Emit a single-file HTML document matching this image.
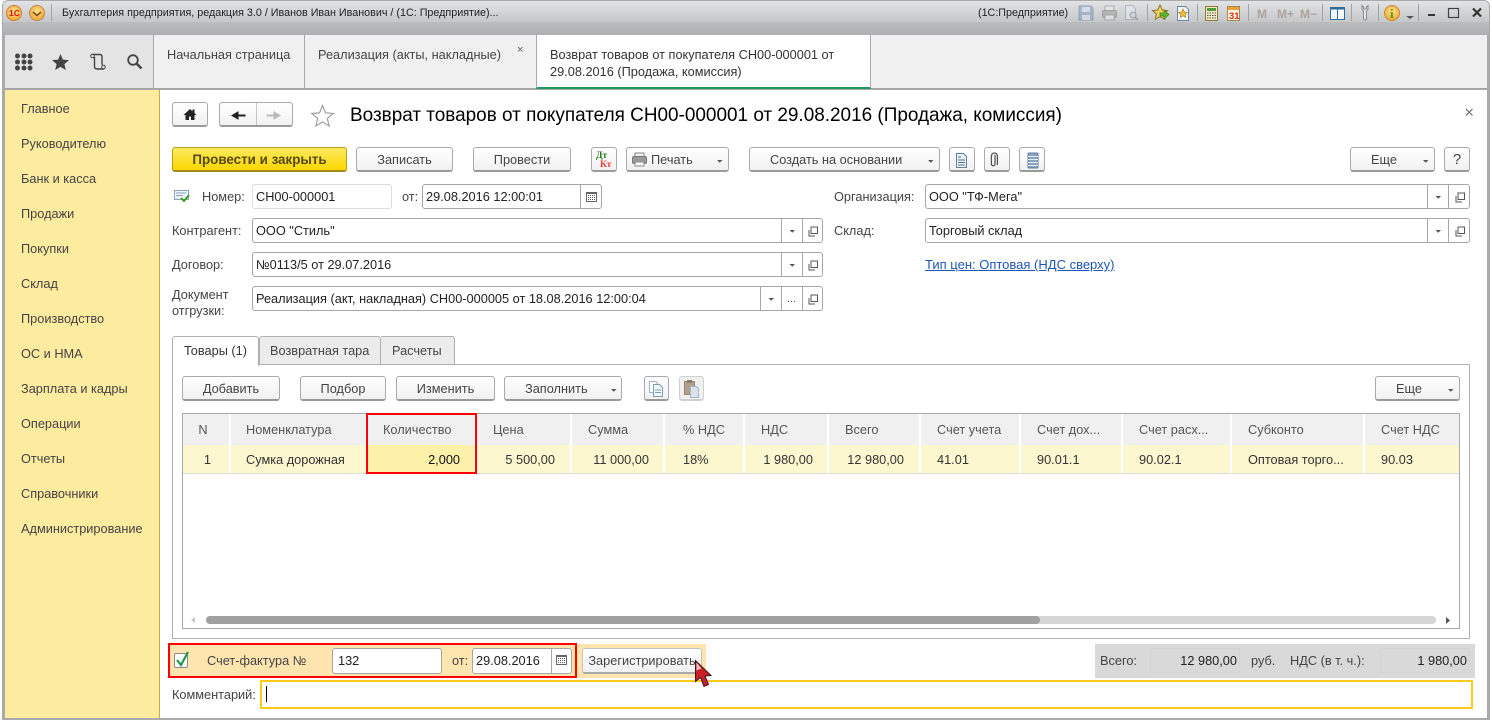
<!DOCTYPE html>
<html lang="ru"><head><meta charset="utf-8"><title>Возврат товаров</title>
<style>
*{box-sizing:border-box}
html,body{margin:0;padding:0;width:1492px;height:724px;overflow:hidden;background:#fff}
body{position:relative;font:12.75px/14px "Liberation Sans",Arial,sans-serif;color:#444}
.a,.t,.b,.f{position:absolute}
.t{white-space:nowrap}
.d{color:#222}
.b{border:1px solid #aaa;border-bottom:2px solid #9a9a9a;border-radius:3px;background:linear-gradient(#fff,#f1f1f1);text-align:center;line-height:24px;height:25px;color:#444;white-space:nowrap}
.f{border:1px solid #a6a6a6;border-radius:3px;background:#fff;height:25px;line-height:23px;padding-left:3px;color:#222;white-space:nowrap}
.s{position:absolute;top:0;bottom:0;width:1px;background:#a6a6a6}
.n{position:absolute;left:21px;white-space:nowrap;color:#444;margin-top:1px}
.h{position:absolute;top:414px;height:31px;background:#f0f0f0;border-right:2px solid #fff;line-height:31px;white-space:nowrap;color:#555}
.c{position:absolute;top:445px;height:28px;background:#fdf7d0;border-right:2px solid #fff;line-height:30px;white-space:nowrap;color:#333}
.pl{padding-left:14px}.pr{text-align:right;padding-right:14px}
</style></head><body>

<!-- window -->
<div class="a" style="left:0;top:0;width:1492px;height:724px;background:#fff"></div>
<div class="a" style="left:2px;top:0;width:1488px;height:720px;border-radius:6px 6px 0 0;background:#a9aaac"></div>
<div class="a" style="left:3px;top:1px;width:1486px;height:21px;border-radius:5px 5px 0 0;background:linear-gradient(#e2e3e4,#c6c7c9)"></div>
<div class="a" style="left:3px;top:22px;width:1486px;height:13px;background:linear-gradient(#bcbdbf,#aeafb1)"></div>
<div class="t" style="left:62px;top:6px;font-size:10.75px;color:#222;line-height:15px">Бухгалтерия предприятия, редакция 3.0 / Иванов Иван Иванович / (1С: Предприятие)...</div>
<div class="t" style="left:978px;top:6px;font-size:10.75px;color:#222;line-height:15px">(1С:Предприятие)</div>

<!-- tab bar -->
<div class="a" style="left:5px;top:35px;width:1482px;height:54px;background:#f0f0f0;border-bottom:1px solid #a3a3a3"></div>
<div class="a" style="left:5px;top:35px;width:148px;height:53px;background:#e4e4e4"></div>
<div class="a" style="left:153px;top:35px;width:1px;height:53px;background:#a9a9a9"></div>
<div class="a" style="left:304px;top:35px;width:1px;height:53px;background:#a9a9a9"></div>
<div class="a" style="left:536px;top:35px;width:335px;height:54px;background:#fff;border-left:1px solid #a9a9a9;border-right:1px solid #a9a9a9;border-bottom:2px solid #1f9a5a"></div>
<div class="t" style="left:167px;top:48px">Начальная страница</div>
<div class="t" style="left:318px;top:48px">Реализация (акты, накладные)</div>
<div class="t" style="left:550px;top:46px;line-height:17px;color:#333">Возврат товаров от покупателя СН00-000001 от<br>29.08.2016 (Продажа, комиссия)</div>

<!-- left nav -->
<div class="a" style="left:5px;top:90px;width:155px;height:629px;background:#fdeb9f;border-right:1px solid #c9ab3f"></div>
<div class="n" style="top:101px">Главное</div>
<div class="n" style="top:136px">Руководителю</div>
<div class="n" style="top:171px">Банк и касса</div>
<div class="n" style="top:206px">Продажи</div>
<div class="n" style="top:241px">Покупки</div>
<div class="n" style="top:276px">Склад</div>
<div class="n" style="top:311px">Производство</div>
<div class="n" style="top:346px">ОС и НМА</div>
<div class="n" style="top:381px">Зарплата и кадры</div>
<div class="n" style="top:416px">Операции</div>
<div class="n" style="top:451px">Отчеты</div>
<div class="n" style="top:486px">Справочники</div>
<div class="n" style="top:521px">Администрирование</div>

<!-- content -->
<div class="a" style="left:160px;top:90px;width:1327px;height:628px;background:#fff"></div>

<div class="b" style="left:172px;top:102px;width:36px"></div>
<div class="b" style="left:219px;top:102px;width:74px"></div>
<div class="a" style="left:256px;top:103px;width:1px;height:22px;background:#c4c4c4"></div>
<div class="t" style="left:350px;top:105px;font-size:18.95px;line-height:21px;color:#000">Возврат товаров от покупателя СН00-000001 от 29.08.2016 (Продажа, комиссия)</div>

<!-- command bar -->
<div class="b" style="left:172px;top:147px;width:175px;background:linear-gradient(#fdea5e,#fbd700);border-color:#b99f20;border-bottom-color:#a08a18;font-weight:bold;font-size:13.4px;color:#554a14">Провести и закрыть</div>
<div class="b" style="left:356px;top:147px;width:97px">Записать</div>
<div class="b" style="left:473px;top:147px;width:98px">Провести</div>
<div class="b" style="left:591px;top:147px;width:26px"></div>
<div class="b" style="left:626px;top:147px;width:103px;text-align:left;padding-left:24px">Печать</div>
<div class="b" style="left:749px;top:147px;width:191px;text-align:left;padding-left:20px">Создать на основании</div>
<div class="b" style="left:949px;top:147px;width:26px"></div>
<div class="b" style="left:984px;top:147px;width:26px"></div>
<div class="b" style="left:1019px;top:147px;width:26px"></div>
<div class="b" style="left:1350px;top:147px;width:85px;text-align:left;padding-left:20px">Еще</div>
<div class="b" style="left:1444px;top:147px;width:26px;font-size:15px;line-height:23px">?</div>

<!-- form -->
<div class="t" style="left:202px;top:190px">Номер:</div>
<div class="f" style="left:252px;top:184px;width:140px;border-color:#dcdcdc">СН00-000001</div>
<div class="t" style="left:402px;top:190px">от:</div>
<div class="f" style="left:422px;top:184px;width:180px">29.08.2016 12:00:01<div class="s" style="left:157px"></div></div>

<div class="t" style="left:172px;top:224px">Контрагент:</div>
<div class="f" style="left:252px;top:218px;width:571px">ООО "Стиль"<div class="s" style="left:528px"></div><div class="s" style="left:549px"></div></div>
<div class="t" style="left:172px;top:258px">Договор:</div>
<div class="f" style="left:252px;top:252px;width:571px">№0113/5 от 29.07.2016<div class="s" style="left:528px"></div><div class="s" style="left:549px"></div></div>
<div class="t" style="left:172px;top:287px;line-height:16px">Документ<br>отгрузки:</div>
<div class="f" style="left:252px;top:286px;width:571px">Реализация (акт, накладная) СН00-000005 от 18.08.2016 12:00:04<div class="s" style="left:507px"></div><div class="s" style="left:528px"></div><div class="s" style="left:549px"></div><div class="a" style="left:534px;top:1px;font-size:11px;color:#555">...</div></div>

<div class="t" style="left:834px;top:190px">Организация:</div>
<div class="f" style="left:925px;top:184px;width:545px">ООО "ТФ-Мега"<div class="s" style="left:501px"></div><div class="s" style="left:522px"></div></div>
<div class="t" style="left:834px;top:224px">Склад:</div>
<div class="f" style="left:925px;top:218px;width:545px">Торговый склад<div class="s" style="left:501px"></div><div class="s" style="left:522px"></div></div>
<div class="t" style="left:925px;top:258px;font-size:13px;color:#1f56b5;text-decoration:underline">Тип цен: Оптовая (НДС сверху)</div>

<!-- tabs -->
<div class="a" style="left:172px;top:364px;width:1298px;height:275px;border:1px solid #b0b0b0;background:#fff"></div>
<div class="a" style="left:259px;top:336px;width:122px;height:29px;background:#ececec;border:1px solid #b0b0b0;border-radius:3px 3px 0 0"></div>
<div class="a" style="left:381px;top:336px;width:74px;height:29px;background:#ececec;border:1px solid #b0b0b0;border-left:0;border-radius:0 3px 0 0"></div>
<div class="a" style="left:172px;top:336px;width:87px;height:30px;background:#fff;border:1px solid #b0b0b0;border-bottom:0;border-radius:3px 3px 0 0"></div>
<div class="t" style="left:184px;top:344px;color:#333">Товары (1)</div>
<div class="t" style="left:270px;top:344px">Возвратная тара</div>
<div class="t" style="left:392px;top:344px">Расчеты</div>

<div class="b" style="left:182px;top:376px;width:98px">Добавить</div>
<div class="b" style="left:300px;top:376px;width:86px">Подбор</div>
<div class="b" style="left:396px;top:376px;width:99px">Изменить</div>
<div class="b" style="left:504px;top:376px;width:118px;text-align:left;padding-left:20px">Заполнить</div>
<div class="b" style="left:644px;top:376px;width:25px"></div>
<div class="b" style="left:679px;top:376px;width:25px;background:#f0f0f0;border-color:#d0d0d0"></div>
<div class="b" style="left:1375px;top:376px;width:85px;text-align:left;padding-left:20px">Еще</div>

<!-- table -->
<div class="a" style="left:182px;top:413px;width:1278px;height:216px;border:1px solid #a9a9a9;background:#fff"></div>
<div class="h" style="left:183px;width:48px;text-align:center;padding-right:6px">N</div>
<div class="h pl" style="left:231px;width:136px;padding-left:15px">Номенклатура</div>
<div class="h pl" style="left:367px;width:109px;padding-left:16px">Количество</div>
<div class="h pl" style="left:476px;width:96px;padding-left:17px">Цена</div>
<div class="h pl" style="left:572px;width:93px;padding-left:16px">Сумма</div>
<div class="h pl" style="left:665px;width:80px;padding-left:18px">% НДС</div>
<div class="h pl" style="left:745px;width:84px;padding-left:16px">НДС</div>
<div class="h pl" style="left:829px;width:92px;padding-left:16px">Всего</div>
<div class="h pl" style="left:921px;width:100px;padding-left:16px">Счет учета</div>
<div class="h pl" style="left:1021px;width:102px;padding-left:16px">Счет дох...</div>
<div class="h pl" style="left:1123px;width:109px;padding-left:16px">Счет расх...</div>
<div class="h pl" style="left:1232px;width:133px;padding-left:16px">Субконто</div>
<div class="h pl" style="left:1365px;width:94px;padding-left:16px;border-right:0">Счет НДС</div>

<div class="c" style="left:183px;width:48px;text-align:right;padding-right:18px">1</div>
<div class="c" style="left:231px;width:136px;padding-left:15px">Сумка дорожная</div>
<div class="c pr" style="left:367px;width:109px;background:#fdf0a8;color:#111">2,000</div>
<div class="c pr" style="left:476px;width:96px;padding-right:15px">5 500,00</div>
<div class="c pr" style="left:572px;width:93px">11 000,00</div>
<div class="c pl" style="left:665px;width:80px;padding-left:18px">18%</div>
<div class="c pr" style="left:745px;width:84px">1 980,00</div>
<div class="c pr" style="left:829px;width:92px;padding-right:15px">12 980,00</div>
<div class="c pl" style="left:921px;width:100px;padding-left:16px">41.01</div>
<div class="c pl" style="left:1021px;width:102px;padding-left:16px">90.01.1</div>
<div class="c pl" style="left:1123px;width:109px;padding-left:16px">90.02.1</div>
<div class="c pl" style="left:1232px;width:133px;padding-left:16px">Оптовая торго...</div>
<div class="c pl" style="left:1365px;width:94px;padding-left:16px;border-right:0">90.03</div>
<div class="a" style="left:183px;top:473px;width:1276px;height:1px;background:#dcdcdc"></div>
<div class="a" style="left:366px;top:413px;width:111px;height:61px;border:2px solid #f00"></div>

<!-- scrollbar -->
<div class="a" style="left:206px;top:616px;width:1230px;height:8px;border-radius:4px;background:#d6d6d6"></div>
<div class="a" style="left:206px;top:616px;width:834px;height:8px;border-radius:4px;background:#a0a0a0"></div>

<!-- invoice bar -->
<div class="a" style="left:168px;top:644px;width:538px;height:34px;background:#fee5b0"></div>
<div class="a" style="left:168px;top:643px;width:409px;height:35px;border:2px solid #f00"></div>
<div class="a" style="left:174px;top:653px;width:14px;height:15px;background:#fff;border:1px solid #8a8a8a;border-radius:2px"></div>
<div class="t" style="left:207px;top:654px">Счет-фактура №</div>
<div class="f" style="left:332px;top:648px;width:110px;height:26px;padding-left:5px">132</div>
<div class="t" style="left:452px;top:654px">от:</div>
<div class="f" style="left:472px;top:648px;width:100px;height:26px">29.08.2016<div class="s" style="left:78px"></div></div>
<div class="b" style="left:582px;top:648px;width:120px;height:26px;border-color:#c4c4c4;border-bottom-color:#aaa">Зарегистрировать</div>

<!-- totals -->
<div class="a" style="left:1095px;top:644px;width:380px;height:34px;background:#d9d9d9"></div>
<div class="a" style="left:1150px;top:648px;width:90px;height:25px;border:1px solid #d4d4d4"></div>
<div class="a" style="left:1380px;top:648px;width:90px;height:25px;border:1px solid #d4d4d4"></div>
<div class="t" style="left:1100px;top:654px">Всего:</div>
<div class="t d" style="right:255px;top:654px">12 980,00</div>
<div class="t" style="left:1251px;top:654px">руб.</div>
<div class="t" style="left:1290px;top:654px">НДС (в т. ч.):</div>
<div class="t d" style="right:25px;top:654px">1 980,00</div>

<!-- comment -->
<div class="t" style="left:172px;top:688px">Комментарий:</div>
<div class="a" style="left:260px;top:680px;width:1213px;height:29px;border:2px solid #fbc918;background:#fff"></div>
<div class="a" style="left:266px;top:686px;width:1px;height:16px;background:#000"></div>

<!-- bottom edge -->
<div class="a" style="left:2px;top:718px;width:1488px;height:2px;background:#a9aaac"></div>

<!-- icons -->
<svg class="a" style="left:0;top:0" width="1492" height="724" viewBox="0 0 1492 724" fill="none">
<defs>
<radialGradient id="o" cx=".5" cy=".4" r=".7"><stop offset="0" stop-color="#ffe48a"/><stop offset="1" stop-color="#f09a2a"/></radialGradient>
<g id="ar"><path d="M0 0h5.500l-2.750 2.750z" fill="#555"/></g>
<g id="op" stroke="#555" stroke-width="1"><path d="M-4.500 -1.500v6h6"/><rect x="-2.500" y="-4.500" width="6.500" height="6.500" fill="#fff"/></g>
<g id="cal"><rect x="0.500" y="0.500" width="10" height="9" fill="#fff" stroke="#666"/><path d="M1 1.500h9" stroke="#666"/><path d="M2 3.500h7M2 5.500h7M2 7.500h7" stroke="#555" stroke-dasharray="1 1"/></g>
</defs>

<!-- title left -->
<circle cx="14" cy="13" r="7.500" fill="url(#o)" stroke="#c9802a"/>
<text x="9" y="16" font-family="Liberation Sans" font-weight="bold" font-size="8.500" fill="#d5141a">1С</text>
<circle cx="37" cy="13" r="7.500" fill="url(#o)" stroke="#b98a50"/>
<path d="M33 12l4 3.500 4-3.500" stroke="#7a4a1a" stroke-width="1.500"/>
<path d="M51.500 4v17M1147.500 4v17M1197.500 4v17M1248.500 4v17M1322.500 4v17M1351.500 4v17M1378.500 4v17M1418.500 4v17" stroke="#a2a3a5"/>

<!-- title toolbar -->
<g opacity=".55">
<path d="M1079 6h12l2 2v12h-14z" fill="#7f9cb8" stroke="#5f7f9f"/><rect x="1082" y="7" width="8" height="5" fill="#d8e2ec"/><rect x="1082" y="15" width="8" height="5" fill="#d8e2ec"/>
<rect x="1105" y="6" width="9" height="5" fill="#eee" stroke="#888"/><rect x="1102.500" y="10.500" width="14" height="7" rx="1.500" fill="#9a9a9a" stroke="#777"/><rect x="1105" y="15" width="9" height="5" fill="#eee" stroke="#888"/>
<path d="M1125.500 5.500h7l3 3v11h-10z" fill="#e6edf3" stroke="#8aa0b5"/><circle cx="1133" cy="15" r="3" fill="#cfd8e0" stroke="#777"/><path d="M1135 17l3 3" stroke="#777" stroke-width="1.500"/>
</g>
<path d="M1160 5l2.300 5 5.200.6-3.900 3.500 1.100 5.200-4.700-2.600-4.700 2.600 1.100-5.200-3.900-3.500 5.200-.6z" fill="#f5cf5a" stroke="#8a7a30"/>
<path d="M1160 13h4v-3l5 4.500-5 4.500v-3h-4z" fill="#63b82e" stroke="#3b7d18" stroke-width=".7"/>
<path d="M1177.500 6.500h8l3 3v11h-11z" fill="#f5f8fc" stroke="#6d85a0"/><path d="M1183 9l1.400 2.900 3 .4-2.200 2.100.6 3-2.800-1.500-2.800 1.500.6-3-2.200-2.100 3-.4z" fill="#eebc3a" stroke="#a08020" stroke-width=".6"/>
<rect x="1205.500" y="6.500" width="12" height="14" fill="#f3ebc8" stroke="#8a7a40"/><rect x="1207" y="8" width="9" height="3" fill="#4f9a3a"/><path d="M1207 13h9M1207 15.500h9M1207 18h9" stroke="#5a5a40" stroke-dasharray="1.500 1"/>
<rect x="1227.500" y="6.500" width="12" height="14" fill="#fdf4d8" stroke="#a08a50"/><rect x="1228" y="7" width="11" height="3" fill="#eea23a"/>
<text x="1229" y="19" font-family="Liberation Sans" font-weight="bold" font-size="9.500" fill="#e02a1a">31</text>
<g font-family="Liberation Sans" font-weight="bold" font-size="12" fill="#ada39c">
<text x="1257" y="18">M</text><text x="1277" y="18">M+</text><text x="1300" y="18">M−</text></g>
<rect x="1330.500" y="7.500" width="14" height="12" fill="#f4f7fa" stroke="#2f6f9f"/><path d="M1330.500 8.500h14" stroke="#2f6f9f" stroke-width="2"/><path d="M1337.500 8v11" stroke="#2f6f9f"/>
<path d="M1362 5.500v4l1.500 2v7a1.500 1.500 0 0 0 3 0v-7l1.500-2v-4l-1.500 1.500v2h-3v-2z" fill="#e6e6e6" stroke="#8a8a8a"/>
<circle cx="1392" cy="13" r="7.500" fill="url(#o)" stroke="#c98a2a"/><text x="1390" y="18" font-family="Liberation Serif" font-weight="bold" font-size="13" fill="#4f9a1a">i</text>
<path d="M1406 16h8l-4 3z" fill="#555"/>
<path d="M1428 15h7" stroke="#333" stroke-width="2"/>
<rect x="1448.500" y="8.500" width="10" height="9" stroke="#444" stroke-width="1.200"/>
<path d="M1473 8.500l8 8M1481 8.500l-8 8" stroke="#333" stroke-width="2.200"/>

<!-- tab close marks -->
<path d="M518 47l4.500 4.500M522.500 47l-4.500 4.500" stroke="#777"/>
<path d="M1466 109l6.500 6.500M1472.500 109l-6.500 6.500" stroke="#666" stroke-width="1.100"/>

<!-- section icons -->
<g fill="#444"><circle cx="17.500" cy="56" r="2.500"/><circle cx="24" cy="56" r="2.500"/><circle cx="30" cy="56" r="2.500"/><circle cx="17.500" cy="62" r="2.500"/><circle cx="24" cy="62" r="2.500"/><circle cx="30" cy="62" r="2.500"/><circle cx="17.500" cy="68" r="2.500"/><circle cx="24" cy="68" r="2.500"/><circle cx="30" cy="68" r="2.500"/></g>
<path d="M60.500 54l2.400 5.600 6.100.5-4.600 4 1.400 5.900-5.300-3.100-5.300 3.100 1.400-5.900-4.600-4 6.100-.5z" fill="#444"/>
<path d="M92 54.500h8c1.500 0 2 1.200 2 2.500v8M94.500 57v9.500c0 1.700 1 2.500 2.500 2.500h7" stroke="#444" stroke-width="1.400"/><circle cx="92.500" cy="56" r="1.800" fill="#e4e4e4" stroke="#444"/><circle cx="103.500" cy="67" r="1.800" fill="#e4e4e4" stroke="#444"/>
<circle cx="133" cy="60" r="4.800" stroke="#444" stroke-width="1.800"/><path d="M136.500 63.500l5 5" stroke="#444" stroke-width="2.500"/>

<!-- home/nav/star -->
<path d="M183.500 115l6.500-6 2.500 2.300v-1.800h2v3.600l2 1.900h-2v5h-3.500v-3.500h-2v3.500h-3.500v-5z" fill="#222"/>
<path d="M245 115h-7v-3l-6 3.500 6 3.500v-3h7z" fill="#222" stroke="#222"/>
<path d="M267 115h7v-3l6 3.500-6 3.500v-3h-7z" fill="#bbb" stroke="#bbb"/>
<path d="M322.500 105.500l3 7.300 7.800.6-6 5 1.900 7.700-6.700-4.200-6.700 4.200 1.900-7.700-6-5 7.800-.6z" fill="#fff" stroke="#999" stroke-width="1.100"/>

<!-- command icons -->
<text x="596" y="158" font-family="Liberation Serif" font-weight="bold" font-size="9.500" fill="#1f7a1a">Дт</text>
<text x="600" y="167" font-family="Liberation Serif" font-weight="bold" font-size="9.500" fill="#ee3a3a">Кт</text>
<rect x="635" y="153" width="9" height="4" fill="#eee" stroke="#888"/><rect x="632.500" y="156.500" width="14" height="7" rx="1.500" fill="#9a9a9a" stroke="#777"/><rect x="635" y="162" width="9" height="4" fill="#fff" stroke="#888"/>
<use href="#ar" x="717" y="160"/><use href="#ar" x="928" y="160"/><use href="#ar" x="1423" y="160"/>
<path d="M956.500 153.500h7l3 3v11h-10z" fill="#eef3f7" stroke="#5f7f9f"/><path d="M958 157h3M958 160h7M958 162.500h7M958 165h7" stroke="#50708f"/>
<path d="M996 155v9a1.800 1.800 0 0 1-3.600 0v-8a3 3 0 0 1 6 0v9" transform="translate(-1 0)" stroke="#555" stroke-width="1.300"/>
<rect x="1028" y="153" width="10" height="15" rx="1" fill="#8aa4bf" stroke="#5f7f9f"/><path d="M1028 156.500h10M1028 159.500h10M1028 162.500h10M1028 165.500h10" stroke="#e6edf3"/>

<!-- field icons -->
<path d="M174.500 190.500h14v9h-14z" fill="#eef4f8" stroke="#8aa4bf"/><path d="M176 193h10M176 195.500h7" stroke="#8aa4bf"/>
<path d="M181 198l3 3 5-6" stroke="#3fa02a" stroke-width="2"/>
<use href="#cal" x="586" y="192"/>
<use href="#ar" x="789.500" y="230"/><use href="#op" x="813.500" y="231.500"/>
<use href="#ar" x="789.500" y="264"/><use href="#op" x="813.500" y="265.500"/>
<use href="#ar" x="768.500" y="298"/><use href="#op" x="813.500" y="299.500"/>
<use href="#ar" x="1435.500" y="196"/><use href="#op" x="1460.500" y="197.500"/>
<use href="#ar" x="1435.500" y="230"/><use href="#op" x="1460.500" y="231.500"/>

<!-- table buttons -->
<use href="#ar" x="611" y="389"/><use href="#ar" x="1448" y="389"/>
<path d="M649.500 381.500h6l2 2v9h-8z" fill="#fff" stroke="#9db3c8"/><path d="M653.500 384.500h6l3 3v9h-9z" fill="#f4f7fa" stroke="#7f9cb8"/><path d="M655 390h6M655 392.500h6" stroke="#7f9cb8"/>
<rect x="684.500" y="381.500" width="10" height="13" fill="#b0a08f" stroke="#968775"/><rect x="687" y="380" width="5" height="3" fill="#8a7d6d"/><path d="M690.500 386.500h6l2 2v9h-8z" fill="#dbe3ea" stroke="#a8b8c6"/>

<!-- scroll arrows -->
<path d="M195 617v6l-4-3z" fill="#c8c8c8"/><path d="M1446 617v7l4-3.500z" fill="#555"/>

<!-- bottom icons -->
<path d="M177 660l4 5 7-13" stroke="#1f9a4a" stroke-width="2.200"/>
<use href="#cal" x="556" y="655"/>

<!-- cursor -->
<path d="M695.500 660.500l0 21 5-4 3.500 9 4.500-2-3.500-8.500 6-.5z" fill="#c81f28" stroke="#3a1a1a" stroke-width="1"/>
<path d="M696.500 662.500l0 8 5-2z" fill="#f0c0c0"/>
</svg>
</body></html>
